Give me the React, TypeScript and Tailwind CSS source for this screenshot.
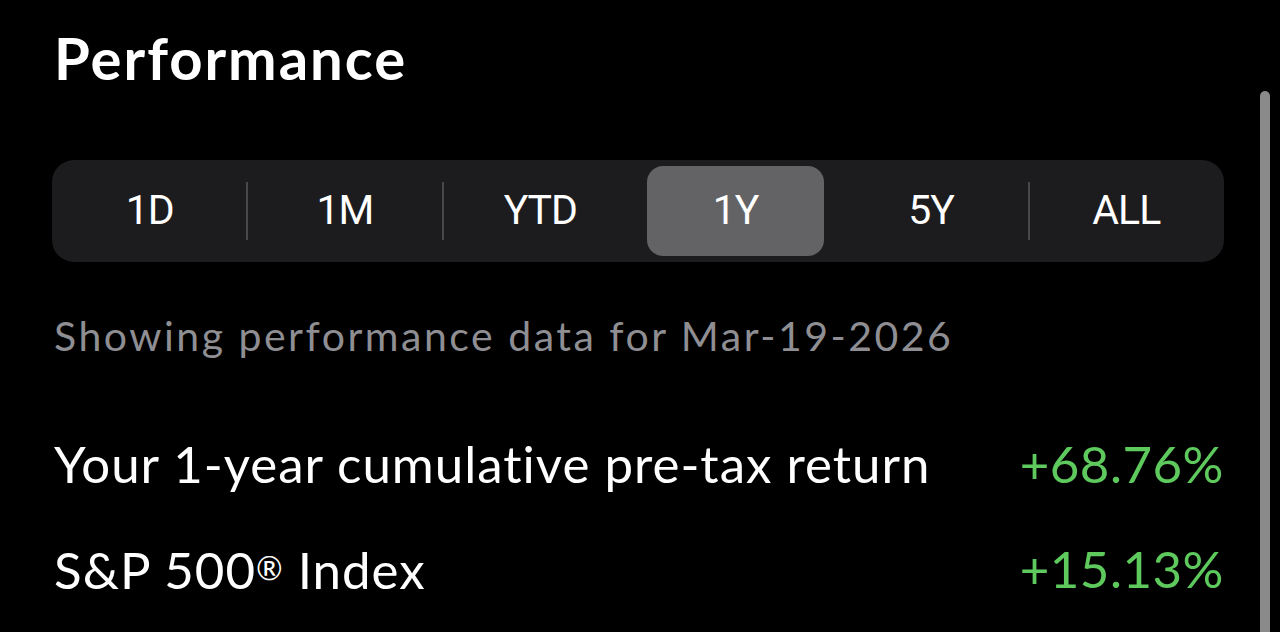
import { useState } from "react";

const periods = ["1D", "1M", "YTD", "1Y", "5Y", "ALL"];

export default function App() {
  const [active, setActive] = useState(3);

  return (
    <div className="relative h-[632px] w-full overflow-hidden bg-black font-['Lato',sans-serif] text-white">
      <div className="pl-[54px] pr-[56px] pt-[26px]">
        <h1 className="text-[58px] font-bold leading-[64px] tracking-[2px]">Performance</h1>

        <div className="-ml-[2px] mt-[70px] grid h-[102px] grid-cols-6 rounded-[22px] bg-[#1c1c1e] py-[6px]">
          {periods.map((p, i) => {
            const selected = i === active;
            const showDivider = i > 0 && i !== active && i - 1 !== active;
            return (
              <div key={p} className="relative flex items-center">
                {showDivider && (
                  <span className="absolute -left-[1px] top-[16px] h-[58px] w-[2px] bg-[#48484a]" />
                )}
                <button
                  onClick={() => setActive(i)}
                  className={
                    "mx-[9px] flex h-full flex-1 items-center justify-center rounded-[16px] font-['Roboto',sans-serif] text-[41px] tracking-[-1px] text-white " +
                    (selected ? "bg-[#636366]" : "")
                  }
                >
                  {p}
                </button>
              </div>
            );
          })}
        </div>

        <p className="mt-[50px] text-[41px] leading-[48px] tracking-[2.5px] text-[#8e8e93]">
          Showing performance data for Mar-19-2026
        </p>

        <div className="mt-[74px] flex items-center justify-between text-[51px] leading-[60px] tracking-[1px]">
          <span>Your 1-year cumulative pre-tax return</span>
          <span className="tracking-[0.5px] text-[#5ec95c]">+68.76%</span>
        </div>

        <div className="mt-[44px] flex items-center justify-between text-[51px] leading-[60px] tracking-[1px]">
          <span>
            S&amp;P 500<span className="align-[9px] text-[32px]">®</span> Index
          </span>
          <span className="tracking-[0.5px] text-[#5ec95c]">+15.13%</span>
        </div>
      </div>

      <div className="absolute right-[10px] top-[91px] h-[560px] w-[10px] rounded-full bg-[#8a8a8a]" />
    </div>
  );
}
